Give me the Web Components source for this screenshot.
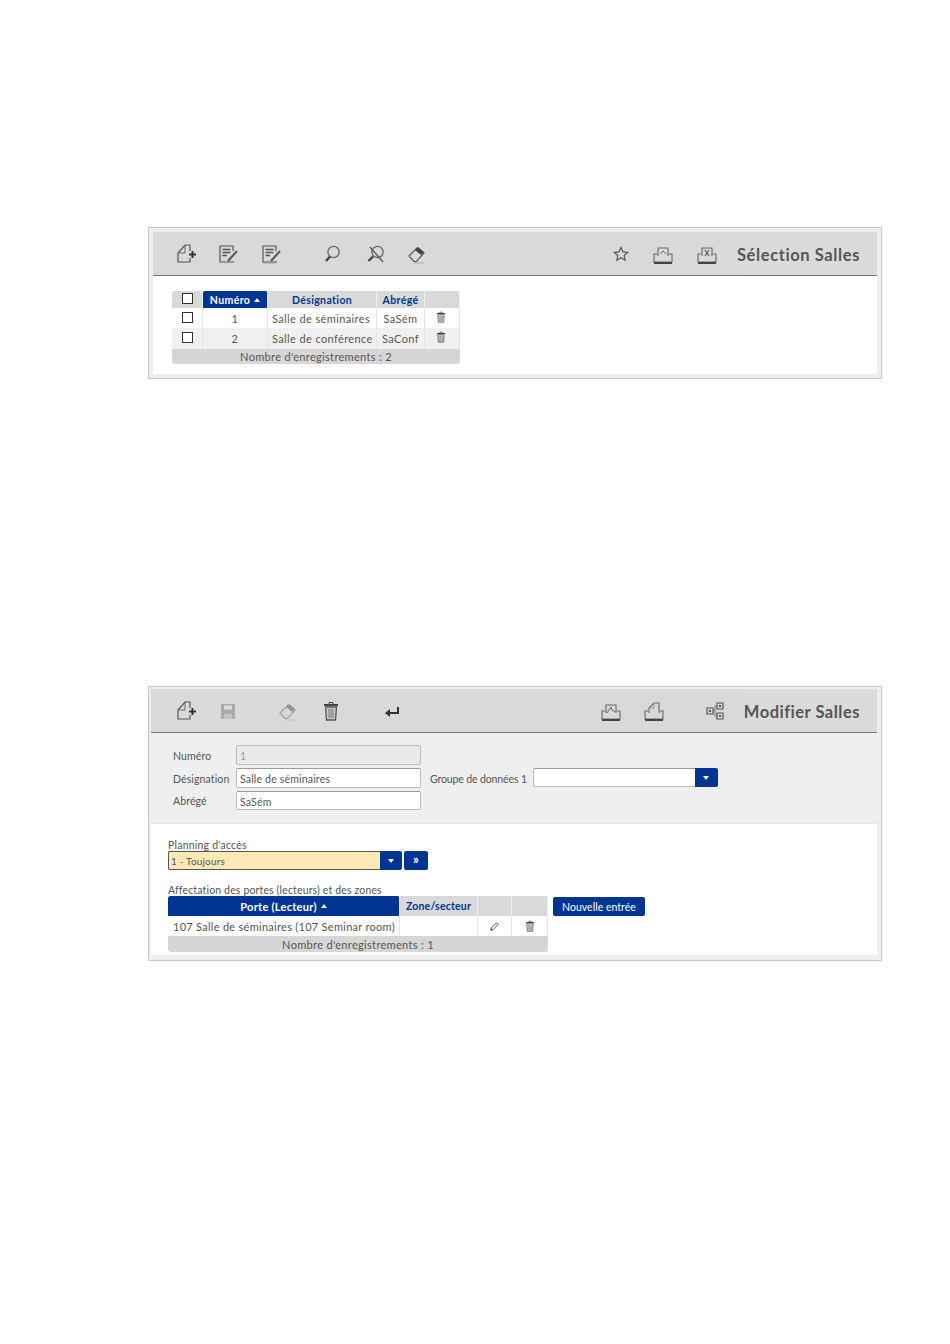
<!DOCTYPE html>
<html lang="fr"><head><meta charset="utf-8"><title>Salles</title>
<style>
html,body{margin:0;padding:0;background:#fff}
body{font-family:Lato,"Noto Sans",sans-serif;color:#555;font-size:10.5px;padding:227px 68px 0 148px;height:1117px;overflow:hidden}
x-panel+x-panel{margin-top:307px}
</style></head><body>

<x-panel h="152" pad="4px 4px 4px 4px">
  <x-toolbar pad="21" title-text="Sélection Salles" title-gap="18" tpad="3" tspace=".6">
    <x-icon name="new"></x-icon>
    <x-icon name="edit" gap="18"></x-icon>
    <x-icon name="edit2" gap="19"></x-icon>
    <x-icon name="search" gap="37"></x-icon>
    <x-icon name="nosearch" gap="19"></x-icon>
    <x-icon name="eraser" gap="18"></x-icon>
    <x-spacer></x-spacer>
    <x-icon name="star" size="20" style="width:24px"></x-icon>
    <x-icon name="pdf" gap="18"></x-icon>
    <x-icon name="xls" gap="20"></x-icon>
  </x-toolbar>
  <x-body pad="15px 18px 0 19px">
    <x-table cols="31px 65px 109px 48px 35px" width="288">
      <x-cell kind="head" h="17"><x-check></x-check></x-cell>
      <x-cell kind="sort" h="17">Numéro <x-caret></x-caret></x-cell>
      <x-cell kind="head" h="17">Désignation</x-cell>
      <x-cell kind="head" h="17">Abrégé</x-cell>
      <x-cell kind="head" h="17"></x-cell>
      <x-cell h="20"><x-check></x-check></x-cell>
      <x-cell h="20">1</x-cell>
      <x-cell h="20" align="left">Salle de séminaires</x-cell>
      <x-cell h="20">SaSém</x-cell>
      <x-cell h="20"><x-icon name="trash" size="14" style="margin:-3px 3px 0 0"></x-icon></x-cell>
      <x-cell h="21" alt><x-check></x-check></x-cell>
      <x-cell h="21" alt>2</x-cell>
      <x-cell h="21" alt align="left">Salle de conférence</x-cell>
      <x-cell h="21" alt>SaConf</x-cell>
      <x-cell h="21" alt><x-icon name="trash" size="14" style="margin:-3px 3px 0 0"></x-icon></x-cell>
      <x-cell kind="foot" h="15">Nombre d'enregistrements : 2</x-cell>
    </x-table>
  </x-body>
</x-panel>

<x-panel h="275" pad="2px 4px 5px 2px">
  <x-toolbar pad="23" title-text="Modifier Salles" title-gap="17" tpad="2" tspace=".5" bigtitle>
    <x-icon name="new"></x-icon>
    <x-icon name="save" gap="18"></x-icon>
    <x-icon name="eraser" gap="36" style="opacity:.45"></x-icon>
    <x-icon name="trash" gap="19"></x-icon>
    <x-icon name="enter" gap="37"></x-icon>
    <x-spacer></x-spacer>
    <x-icon name="pdfa"></x-icon>
    <x-icon name="print" gap="19"></x-icon>
    <x-icon name="tree" gap="37"></x-icon>
  </x-toolbar>
  <x-form-section>
    <x-form-row top="12" label="Numéro"><x-input w="185" h="20" disabled>1</x-input></x-form-row>
    <x-form-row top="3" label="Désignation"><x-input w="185" h="20">Salle de séminaires</x-input>
      <x-label gap="9" style="margin-right:6px">Groupe de données 1</x-label>
      <x-select w="185" h="19" btn="23" style="margin-top:-1px"></x-select>
    </x-form-row>
    <x-form-row top="3" label="Abrégé"><x-input w="185" h="19">SaSém</x-input></x-form-row>
  </x-form-section>
  <x-body pad="16px 17px 0">
    <x-text h="11">Planning d'accès</x-text>
    <x-combo></x-combo>
    <x-text h="11" style="margin-top:15px;letter-spacing:.15px">Affectation des portes (lecteurs) et des zones</x-text>
    <x-row>
      <x-table cols="232px 78px 34px 36px" width="380" square>
        <x-cell kind="sort" h="20" big>Porte (Lecteur) <x-caret></x-caret></x-cell>
        <x-cell kind="head" h="20" zone>Zone/secteur</x-cell>
        <x-cell kind="head" h="20"></x-cell>
        <x-cell kind="head" h="20"></x-cell>
        <x-cell h="20" align="left" big>107 Salle de séminaires (107 Seminar room)</x-cell>
        <x-cell h="20"></x-cell>
        <x-cell h="20"><x-icon name="pen" size="13"></x-icon></x-cell>
        <x-cell h="20"><x-icon name="trash" size="14"></x-icon></x-cell>
        <x-cell kind="foot" h="16">Nombre d'enregistrements : 1</x-cell>
      </x-table>
      <x-button style="margin:1px 0 0 5px">Nouvelle entrée</x-button>
    </x-row>
  </x-body>
</x-panel>

<script>
const TRAY='<path d="M6 12H3v8h18v-8h-3" fill="none" stroke="#666" stroke-width="1.100"/><path d="M3 21h18" stroke="#444" stroke-width="2"/>';
const EDIT='<path d="M17 9V4H4v16h13v-1" fill="none" stroke="#556" stroke-width="1.200"/><path d="M6.500 7.500h8M6.500 10.500h8M6.500 13.500h4.500" stroke="#555" stroke-width="1.300"/><path d="m12 19 9-10" stroke="#555" stroke-width="2"/>';
const ICONS={
new:'<path d="M16 9V3h-5l-7 8v9h12v-4" fill="none" stroke="#555" stroke-width="1.200"/><path d="M11 3v8H4" fill="none" stroke="#667" stroke-width="1"/><path d="M18.500 9v7M15 12.500h7" stroke="#333" stroke-width="2"/>',
edit:EDIT,
edit2:EDIT+'<path d="M4 21.500h13" stroke="#bbb" stroke-width="1"/>',
search:'<circle cx="13.500" cy="10" r="5.600" fill="none" stroke="#666" stroke-width="1.300"/><path d="m6 19 4-4.500" stroke="#444" stroke-width="2.400"/>',
nosearch:'<circle cx="14.500" cy="10" r="5.600" fill="none" stroke="#666" stroke-width="1.300"/><path d="m5.500 19 4.500-4.500" stroke="#444" stroke-width="2.400"/><path d="m7 5 13 15" stroke="#555" stroke-width="1.300"/>',
eraser:'<path d="m4 14 8-8 7 5-7.500 8.500H9z" fill="none" stroke="#555" stroke-width="1.200"/><path d="m10 8 3-3 6 5-3 3z" fill="#444"/><path d="M9 21h10" stroke="#aaa" stroke-width="1"/>',
star:'<path d="m12 4 2.400 5.400 5.600.6-4.200 3.800 1.200 5.700-5-3-5 3 1.200-5.700L4 10l5.600-.6z" fill="none" stroke="#555" stroke-width="1.400"/>',
pdf:'<path d="M7 14V6h10v8" fill="none" stroke="#666" stroke-width="1.100"/><path d="m9 12 3-3 3 3" fill="none" stroke="#666"/>'+TRAY,
pdfa:'<path d="M7 14V6h10v8" fill="none" stroke="#666" stroke-width="1.100"/><path d="m8 14 4-6 1 3 3 2" fill="none" stroke="#666"/>'+TRAY,
xls:'<path d="M7 14V6h10v8" fill="none" stroke="#666" stroke-width="1.100"/><path d="m10 8 4 6M14 8l-4 6" stroke="#555" stroke-width="1.100"/>'+TRAY,
print:'<path d="M7 14V9l5-5h5v10" fill="none" stroke="#666" stroke-width="1.100"/><path d="M7 9h5V4" fill="none" stroke="#999"/>'+TRAY,
save:'<path d="M5 5h14v15H5z" fill="#aaa"/><path d="M8 6.500h8v4H8z" fill="#ddd"/><path d="M8 15h8v5H8z" fill="#c4c4c4"/>',
trash:'<path d="M6.500 8 7.500 21h9L17.500 8z" fill="#bbb" fill-opacity=".6" stroke="#555" stroke-width="1.300"/><path d="M5 6h14" stroke="#444" stroke-width="2"/><path d="M10 3.500h4v2h-4z" fill="none" stroke="#444"/><path d="M10 10v9M12 10v9M14 10v9" stroke="#777"/>',
enter:'<path d="M18 8v6H9" fill="none" stroke="#333" stroke-width="2"/><path d="M10 10v8L5 14z" fill="#333"/>',
tree:'<path d="M4 9h6v6H4zM14 4h6v6h-6zM14 14h6v6h-6z" fill="none" stroke="#555" stroke-width="1.200"/><path d="M6 11h2v2H6zM16 6h2v2h-2zM16 16h2v2h-2z" fill="#555"/><path d="M10 11.500h2V7h2M12 12v5h2" fill="none" stroke="#777"/>',
pen:'<path d="m5 19 1-4L16 5l3 3L9 18z" fill="none" stroke="#555" stroke-width="1.800"/><path d="m5 19 1-4 3 3z" fill="#444"/>'
};
function def(name,css,html,init){
  customElements.define(name,class extends HTMLElement{
    constructor(){super();this.attachShadow({mode:'open'})}
    connectedCallback(){
      const h=typeof html==='function'?html(this):html;
      this.shadowRoot.innerHTML='<style>'+css+'</style>'+h;
      if(init)init(this);
    }
  });
}
def('x-panel',':host{display:block;box-sizing:border-box;width:734px;border:1px solid #c6c6c6;background:#eee;overflow:hidden}.i{background:#fff;height:100%;display:flex;flex-direction:column}','<div class="i"><slot></slot></div>',e=>{e.style.height=e.getAttribute('h')+'px';e.style.padding=e.getAttribute('pad')});
def('x-toolbar',':host{display:flex;align-items:center;height:44px;box-sizing:border-box;background:#d9d9d9;border-bottom:1px solid #777;flex:none}.t{font:700 16.500px Lato,"Noto Sans",sans-serif;color:#555;white-space:nowrap;padding-right:17px;align-self:stretch;display:flex;align-items:center;background:#dbdbdb;box-sizing:border-box}',
 e=>'<slot></slot><div class="t" style="margin-left:'+e.getAttribute('title-gap')+'px;padding-top:'+e.getAttribute('tpad')+'px;letter-spacing:'+e.getAttribute('tspace')+'px">'+e.getAttribute('title-text')+'</div>',
 e=>{e.style.paddingLeft=e.getAttribute('pad')+'px'});
def('x-spacer',':host{display:block;flex:1}','');
def('x-icon',':host{display:inline-flex;align-items:center;justify-content:center;flex:none;width:24px;height:24px}svg{display:block}',
 e=>{const s=e.getAttribute('size')||24;return '<svg xmlns="http://www.w3.org/2000/svg" width="'+s+'" height="'+s+'" viewBox="0 0 24 24">'+ICONS[e.getAttribute('name')]+'</svg>'},
 e=>{if(e.hasAttribute('gap'))e.style.marginLeft=e.getAttribute('gap')+'px';const s=e.getAttribute('size');if(s&&!e.style.width){e.style.width=s+'px';e.style.height=s+'px'}});
def('x-body',':host{display:block;flex:1}','<slot></slot>',e=>{e.style.padding=e.getAttribute('pad')});
def('x-table',':host{display:grid;background:#fff;border-radius:2px;overflow:hidden}','<slot></slot>',e=>{e.style.gridTemplateColumns=e.getAttribute('cols');e.style.width=e.getAttribute('width')+'px'});
def('x-cell',`:host{display:flex;align-items:center;justify-content:center;box-sizing:border-box;font-size:11px;letter-spacing:.38px;color:#555;white-space:nowrap;border-right:1px solid #e4e4e4;background:#fff}
:host([alt]){background:#f0f0f0}
:host([align=left]){justify-content:flex-start;padding-left:4px}
:host([kind=head]){background:#d9d9d9;color:#003594;font-weight:700;font-size:10.500px;border-right:1px solid #efefef}
:host([kind=sort]){background:#003594;color:#fff;font-weight:700;font-size:10.500px;border-radius:2px 2px 0 0}
:host([kind=foot]){grid-column:1/-1;background:#d6d6d6;border-right:0;border-radius:0 0 3px 3px;letter-spacing:.32px}
:host([big]){font-size:11px;letter-spacing:.28px}
:host([big][align=left]){padding-left:5px}
:host([zone]){letter-spacing:.2px}`,'<slot></slot>',e=>{e.style.height=e.getAttribute('h')+'px'});
def('x-caret',':host{display:inline-block;width:0;height:0;border:3.500px solid transparent;border-top:0;border-bottom:4px solid currentColor;margin-left:4px;vertical-align:2px}','');
def('x-check',':host{display:block;box-sizing:border-box;width:11px;height:11px;border:1px solid #333;background:#fff;margin:-2px 0 0 1px}','');
def('x-form-section',':host{display:block;box-sizing:border-box;height:91px;background:#efefef;border-bottom:1px solid #e6e6e6;padding-left:22px;flex:none}','<slot></slot>');
def('x-form-row',':host{display:flex;align-items:center}.l{width:63px;flex:none;color:#555;letter-spacing:.12px;white-space:nowrap;padding-top:1px}',
 e=>'<div class="l">'+e.getAttribute('label')+'</div><slot></slot>',
 e=>{e.style.marginTop=e.getAttribute('top')+'px'});
def('x-input',`:host{display:block;box-sizing:border-box;background:#fff;border:1px solid #bbb;border-top-color:#999;border-radius:2px;padding:2px 3px 0 3px;line-height:17px;font-size:10.500px;color:#555;letter-spacing:.18px;white-space:nowrap}
:host([disabled]){background:#eaeaea;color:#999;border-color:#bbb}`,'<slot></slot>',e=>{e.style.width=e.getAttribute('w')+'px';e.style.height=e.getAttribute('h')+'px'});
def('x-label',':host{display:block;letter-spacing:-.12px;white-space:nowrap;padding-top:1px}','<slot></slot>',e=>{e.style.marginLeft=e.getAttribute('gap')+'px'});
def('x-select',`:host{display:flex;box-sizing:border-box}.f{flex:1;background:#fff;border:1px solid #bbb;border-top-color:#999;border-right:0;border-radius:2px 0 0 2px}
.b{background:#003594;border-radius:0 2px 2px 0;display:flex;align-items:center;justify-content:center}.b i{width:0;height:0;border:3px solid transparent;border-bottom:0;border-top:4px solid #fff}`,
 e=>'<div class="f"></div><div class="b" style="width:'+e.getAttribute('btn')+'px"><i></i></div>',
 e=>{e.style.width=e.getAttribute('w')+'px';e.style.height=e.getAttribute('h')+'px'});
def('x-text',':host{display:block;letter-spacing:.22px;white-space:nowrap;line-height:11px}','<slot></slot>',e=>{e.style.height=e.getAttribute('h')+'px'});
def('x-combo',`:host{display:flex;height:19px}.f{box-sizing:border-box;width:212px;background:#fde9b5;border:1px solid #555;border-right:0;border-radius:2px 0 0 2px;padding-left:2px;line-height:18px;letter-spacing:.18px;color:#555;font-size:10px}
.b{width:22px;background:#003594;border-radius:0 2px 2px 0;display:flex;align-items:center;justify-content:center}.b i{width:0;height:0;border:3px solid transparent;border-bottom:0;border-top:4px solid #fff}
.g{width:24px;margin-left:2px;background:#003594;border-radius:2px;display:flex;align-items:center;justify-content:center;color:#fff;font-size:13px;font-weight:700;line-height:1;padding-bottom:2px;box-sizing:border-box}`,
 '<div class="f">1 - Toujours</div><div class="b"><i></i></div><div class="g">»</div>');
def('x-row',':host{display:flex;align-items:flex-start}','<slot></slot>');
def('x-button',':host{display:flex;align-items:center;justify-content:center;width:92px;height:19px;background:#003594;color:#fff;border-radius:2px;letter-spacing:.02px;white-space:nowrap;font-size:10.500px}','<slot></slot>');
</script>
</body></html>
